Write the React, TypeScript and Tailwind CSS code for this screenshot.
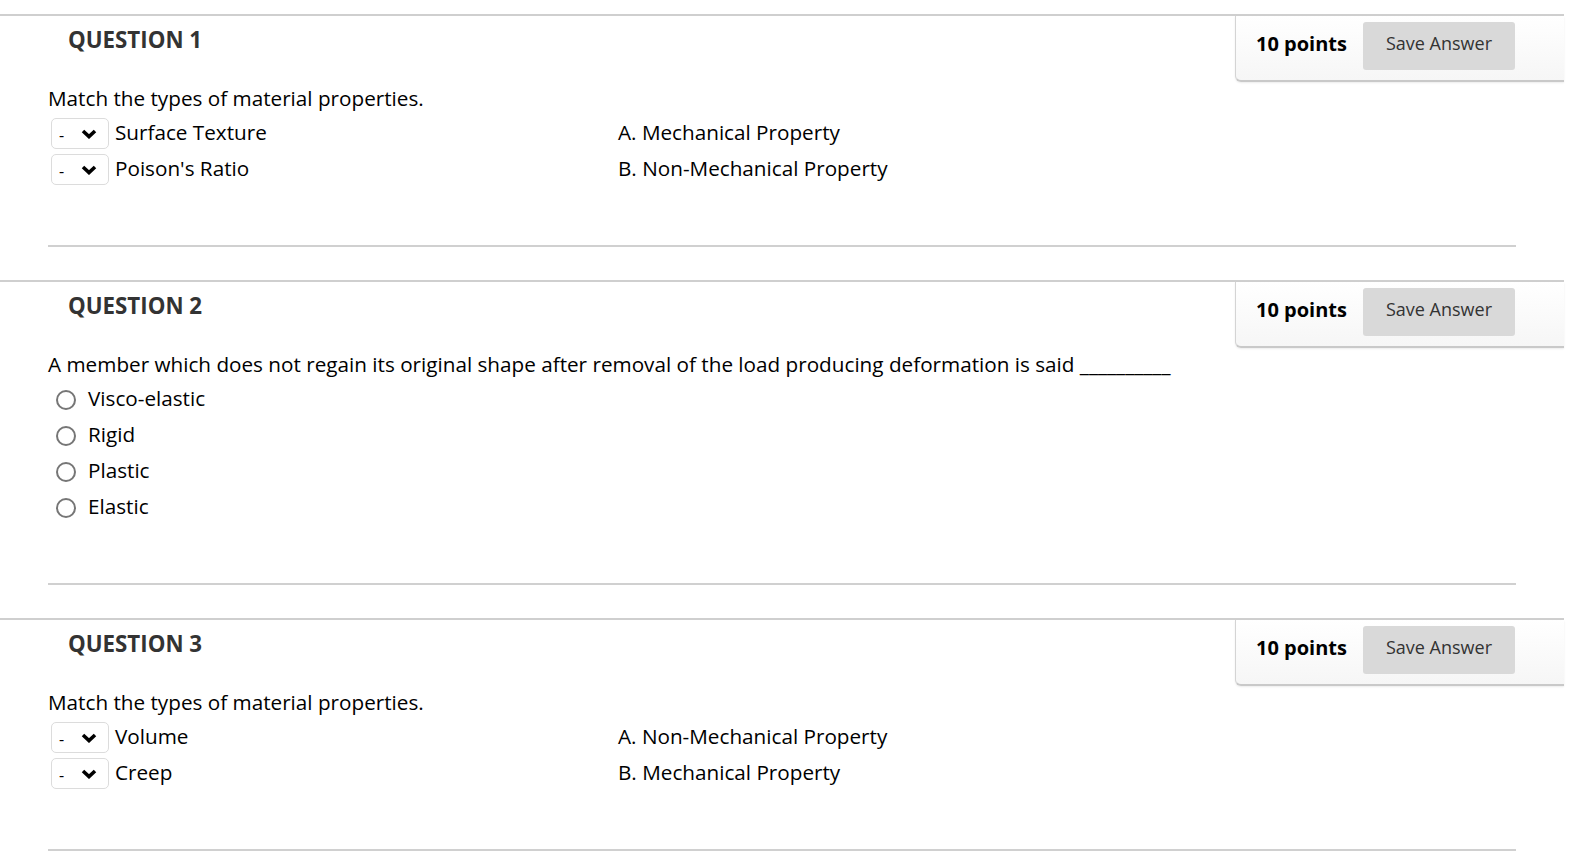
import React from "react";

type Match = { kind: "match"; prompt: string; items: string[]; answers: string[] };
type Choice = { kind: "choice"; prompt: string; options: string[] };
type Question = Match | Choice;

const QUESTIONS: Question[] = [
  {
    kind: "match",
    prompt: "Match the types of material properties.",
    items: ["Surface Texture", "Poison's Ratio"],
    answers: ["A. Mechanical Property", "B. Non-Mechanical Property"],
  },
  {
    kind: "choice",
    prompt:
      "A member which does not regain its original shape after removal of the load producing deformation is said __________",
    options: ["Visco-elastic", "Rigid", "Plastic", "Elastic"],
  },
  {
    kind: "match",
    prompt: "Match the types of material properties.",
    items: ["Volume", "Creep"],
    answers: ["A. Non-Mechanical Property", "B. Mechanical Property"],
  },
];

function Chevron() {
  return (
    <svg width="16" height="10" viewBox="0 0 16 10" className="block">
      <polyline
        points="2,2 8,7.6 14,2"
        fill="none"
        stroke="#000"
        strokeWidth="3.6"
        strokeLinejoin="miter"
      />
    </svg>
  );
}

function MatchSelect() {
  return (
    <div className="ml-[3px] flex h-[31px] w-[58px] shrink-0 items-center rounded-[5px] border-[1.5px] border-[#dcdcdc] bg-white">
      <span className="ml-[7px] mt-[3px] text-[16px] leading-none text-black">-</span>
      <span className="ml-auto mr-[11px]">
        <Chevron />
      </span>
    </div>
  );
}

function PointsBox() {
  return (
    <div className="flex h-[66px] w-[329px] shrink-0 items-start rounded-bl-[6px] border-b-2 border-l-[1.5px] border-b-[#c9c9c9] border-l-[#d4d4d4] bg-gradient-to-b from-white to-[#f6f6f6] pl-[20px] shadow-[0_1px_2px_rgba(0,0,0,0.08)]">
      <div className="mt-[14px] text-[20px] font-bold leading-[28px] text-black">10 points</div>
      <button
        type="button"
        className="ml-[16px] mt-[6px] flex h-[48px] w-[152px] justify-center rounded-[3px] bg-[#d9d9d9] pt-[9px] text-[18px] leading-[24px] text-[#333]"
      >
        Save Answer
      </button>
    </div>
  );
}

function QuestionBlock({ n, q }: { n: number; q: Question }) {
  return (
    <div className="border-t-2 border-[#cfcfcf] pb-[33px]">
      {/* header */}
      <div className="flex">
        <div className="flex-1 pl-[68px] pt-[9px]">
          <div className="text-[22.3px] font-bold leading-[30px] text-[#333]">QUESTION {n}</div>
        </div>
        <PointsBox />
      </div>

      {/* body */}
      <div className="pl-[48px]">
        <div className="mt-[2px] text-[20.7px] leading-[28px] text-black">{q.prompt}</div>
        <div className="mt-[6px] flex flex-col gap-[5px]">
          {q.kind === "match"
            ? q.items.map((item, i) => (
                <div key={item} className="flex h-[31px] items-start">
                  <div className="flex w-[570px] items-start">
                    <MatchSelect />
                    <span className="ml-[6px] text-[20.7px] leading-[28px] text-black">{item}</span>
                  </div>
                  <span className="text-[20.7px] leading-[28px] text-black">{q.answers[i]}</span>
                </div>
              ))
            : q.options.map((opt) => (
                <div key={opt} className="flex h-[31px] items-start">
                  <span className="ml-[8px] mt-[6px] h-[20px] w-[20px] shrink-0 rounded-full border-2 border-[#767676] bg-white" />
                  <span className="ml-[12px] text-[20.7px] leading-[28px] text-black">{opt}</span>
                </div>
              ))}
        </div>
        <div className="mt-[60px] h-[2px] w-[1468px] bg-[#d0d0d0]" />
      </div>
    </div>
  );
}

export default function App() {
  return (
    <div className="min-h-screen bg-white pt-[14px] font-['Open_Sans',sans-serif]">
      <div className="w-[1564px]">
        {QUESTIONS.map((q, i) => (
          <QuestionBlock key={i} n={i + 1} q={q} />
        ))}
      </div>
    </div>
  );
}
